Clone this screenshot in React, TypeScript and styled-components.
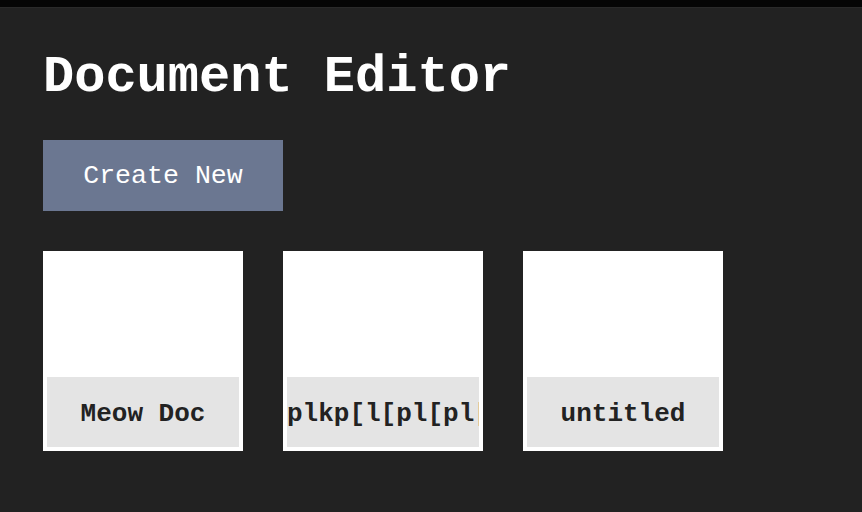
import React from "react";
import styled, { createGlobalStyle } from "styled-components";

const GlobalStyle = createGlobalStyle`
  html, body {
    margin: 0;
    padding: 0;
    background: #222222;
  }
  body {
    font-family: "Liberation Mono", "Courier New", monospace;
    color: #ffffff;
  }
`;

const TopBar = styled.div`
  height: 8px;
  background: #050505;
  border-bottom: 1px solid #2a2a2a;
  box-sizing: border-box;
`;

const Main = styled.main`
  padding: 0 43px;
`;

const Title = styled.h1`
  margin: 40px 0 0;
  font-size: 52px;
  line-height: 60px;
  font-weight: 700;
  color: #ffffff;
`;

const CreateButton = styled.button`
  margin-top: 32px;
  display: block;
  height: 71px;
  width: 240px;
  padding: 0;
  border: none;
  background: #6b7791;
  color: #ffffff;
  font-family: "Liberation Mono", "Courier New", monospace;
  font-size: 26.6px;
  cursor: pointer;
`;

const CardRow = styled.div`
  display: flex;
  gap: 40px;
  margin-top: 40px;
`;

const Card = styled.div`
  width: 200px;
  height: 200px;
  box-sizing: border-box;
  padding: 4px;
  background: #ffffff;
  display: flex;
  flex-direction: column;
  justify-content: flex-end;
`;

const CardLabel = styled.div`
  height: 70px;
  box-sizing: border-box;
  padding-top: 2px;
  background: #e4e4e4;
  color: #222222;
  font-size: 26px;
  font-weight: 700;
  line-height: 70px;
  text-align: center;
  white-space: nowrap;
  overflow: hidden;
`;

const docs = ["Meow Doc", "plkp[l[pl[pl[pl[", "untitled"];

export default function App() {
  return (
    <>
      <GlobalStyle />
      <TopBar />
      <Main>
        <Title>Document Editor</Title>
        <CreateButton>Create New</CreateButton>
        <CardRow>
          {docs.map((d) => (
            <Card key={d}>
              <CardLabel>{d}</CardLabel>
            </Card>
          ))}
        </CardRow>
      </Main>
    </>
  );
}
